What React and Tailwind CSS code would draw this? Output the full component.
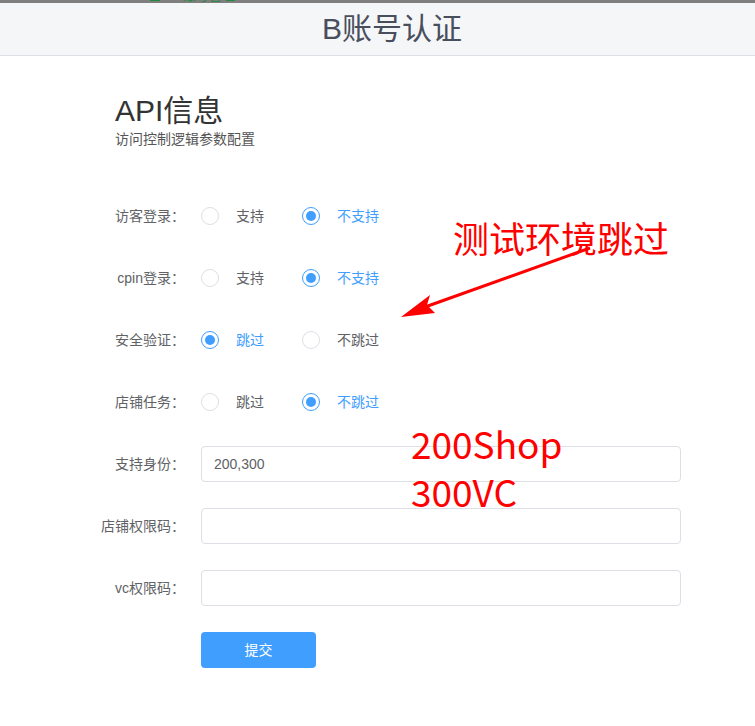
import { useState } from 'react';

const FONT = 'font-["Liberation_Sans","Noto_Sans_CJK_SC",sans-serif]';

function Radio({ checked, label, onClick }) {
  return (
    <button type="button" onClick={onClick} className="flex items-center w-[101px] text-left">
      <span
        className={
          'w-[18px] h-[18px] rounded-full border flex items-center justify-center bg-white shrink-0 ' +
          (checked ? 'border-[#409eff]' : 'border-[#dcdfe6]')
        }
      >
        {checked && <span className="w-[10px] h-[10px] rounded-full bg-[#409eff]" />}
      </span>
      <span className={'ml-[17px] text-[14px] ' + (checked ? 'text-[#409eff]' : 'text-[#606266]')}>{label}</span>
    </button>
  );
}

function Row({ label, children }) {
  return (
    <div className="flex items-center h-10">
      <div className="w-[121px] pr-[16px] text-right text-[14px] text-[#606266] shrink-0">{label}</div>
      {children}
    </div>
  );
}

export default function App() {
  const [form, setForm] = useState({
    guest: 1,
    cpin: 1,
    safe: 0,
    shop: 1,
    ids: '200,300',
    shopCode: '',
    vcCode: '',
  });

  const radios = [
    ['guest', '访客登录：', ['支持', '不支持']],
    ['cpin', 'cpin登录：', ['支持', '不支持']],
    ['safe', '安全验证：', ['跳过', '不跳过']],
    ['shop', '店铺任务：', ['跳过', '不跳过']],
  ];

  const inputs = [
    ['ids', '支持身份：'],
    ['shopCode', '店铺权限码：'],
    ['vcCode', 'vc权限码：'],
  ];

  return (
    <div className={'relative min-h-[726px] bg-white ' + FONT}>
      {/* clipped tab strip */}
      <div className="h-[3px] bg-[#7f7f7f] overflow-hidden flex items-end pl-[150px]">
        <div className="flex items-center gap-[4px] shrink-0 h-[14px]">
          <span className="w-[10px] h-[10px] bg-[#1f8a3c]" />
          <span className="text-[13px] leading-[14px] text-[#1f8a3c]">AIJ账号管理</span>
        </div>
      </div>

      {/* Header */}
      <div className="h-[53px] bg-[#f5f6f8] border-b border-[#dcdfe6] flex items-center justify-center pl-[29px]">
        <h1 className="text-[30px] leading-none text-[#484e5c]">B账号认证</h1>
      </div>

      <div className="pl-[115px] pt-[37px]">
        <h2 className="text-[30px] leading-[36px] text-[#333]">API信息</h2>
        <p className="text-[14px] leading-[20px] text-[#555]">访问控制逻辑参数配置</p>
      </div>

      <div className="ml-[80px] mt-[47px] flex flex-col gap-[22px]">
        {radios.map(([key, label, opts]) => (
          <Row key={key} label={label}>
            {opts.map((o, i) => (
              <Radio key={o} label={o} checked={form[key] === i} onClick={() => setForm({ ...form, [key]: i })} />
            ))}
          </Row>
        ))}
        {inputs.map(([key, label]) => (
          <Row key={key} label={label}>
            <input
              value={form[key]}
              onChange={(e) => setForm({ ...form, [key]: e.target.value })}
              className="w-[480px] h-[36px] border border-[#dcdfe6] rounded-[4px] px-[12px] text-[14px] text-[#606266] outline-none"
            />
          </Row>
        ))}
        <Row label="">
          <button className="w-[115px] h-[36px] rounded-[4px] bg-[#409eff] text-white text-[14px]">提交</button>
        </Row>
      </div>

      {/* red annotations */}
      <div className='absolute left-[453px] top-[219px] text-[36px] leading-none text-[#ff0000] font-["Noto_Sans_CJK_SC",sans-serif]'>
        测试环境跳过
      </div>
      <div className='absolute left-[411px] top-[419px] text-[37px] leading-[48px] text-[#ff0000] font-["Noto_Sans_CJK_SC",sans-serif]'>
        <div>200Shop</div>
        <div>300VC</div>
      </div>
      <svg className="absolute left-0 top-0 pointer-events-none" width="755" height="726">
        <line x1="590" y1="248" x2="425" y2="307" stroke="#ff0000" strokeWidth="3" />
        <polygon points="401,317 430,295 427,305 435,313" fill="#ff0000" />
      </svg>
    </div>
  );
}
